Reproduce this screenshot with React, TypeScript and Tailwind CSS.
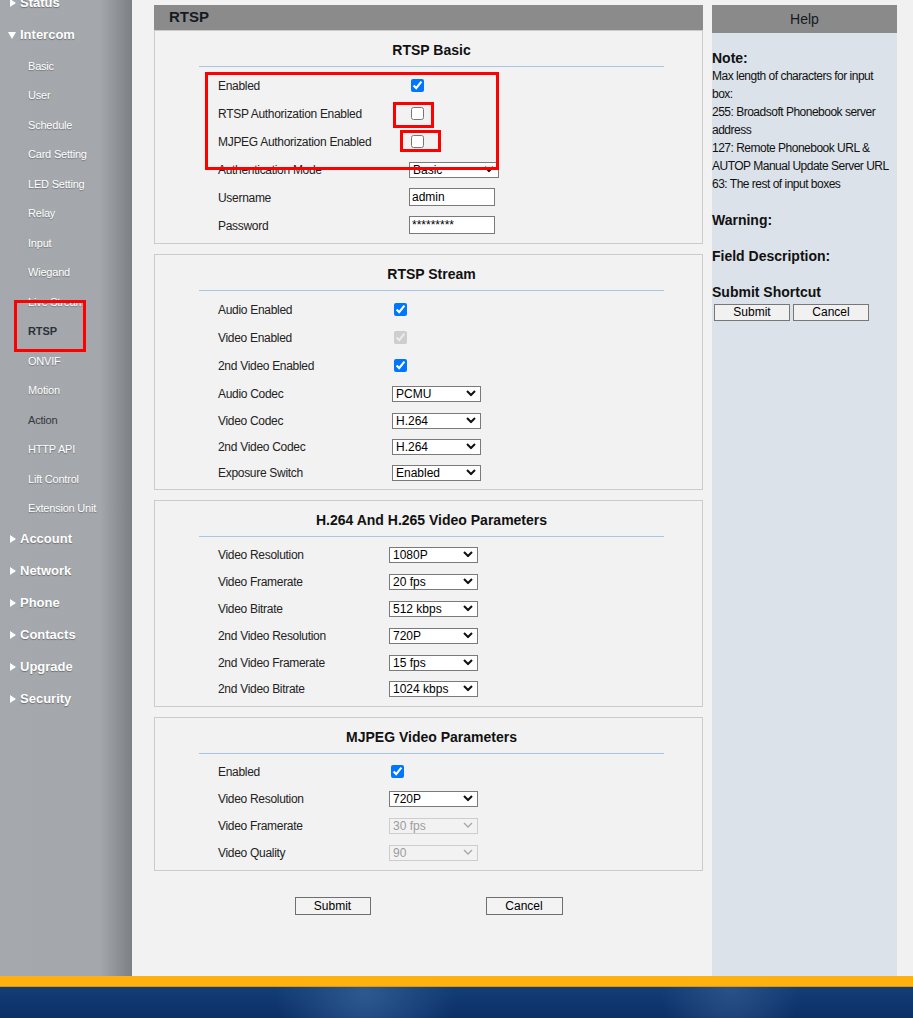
import React from "react";

type Row =
  | { label: string; kind: "check"; checked?: boolean; disabled?: boolean }
  | { label: string; kind: "select"; value: string; disabled?: boolean }
  | { label: string; kind: "input"; value: string };

const intercomItems = [
  "Basic",
  "User",
  "Schedule",
  "Card Setting",
  "LED Setting",
  "Relay",
  "Input",
  "Wiegand",
  "Live Stream",
  "RTSP",
  "ONVIF",
  "Motion",
  "Action",
  "HTTP API",
  "Lift Control",
  "Extension Unit",
];

const lowerSections = ["Account", "Network", "Phone", "Contacts", "Upgrade", "Security"];

function RightArrow() {
  return (
    <svg width="6" height="8" viewBox="0 0 6 8" className="shrink-0">
      <path d="M0 0l6 4-6 4z" fill="#fff" />
    </svg>
  );
}

function DownArrow() {
  return (
    <svg width="8" height="7" viewBox="0 0 8 7" className="shrink-0">
      <path d="M0 0h8L4 7z" fill="#fff" />
    </svg>
  );
}

function SectionHead({ label, open }: { label: string; open?: boolean }) {
  return (
    <div className={open ? "h-[32px] flex items-center gap-[4px] pl-[8px]" : "h-[32px] flex items-center gap-[4px] pl-[10px]"}>
      {open ? <DownArrow /> : <RightArrow />}
      <span className="text-[13px] font-bold text-white [text-shadow:0_1px_1px_rgba(0,0,0,0.35)]">{label}</span>
    </div>
  );
}

function Sidebar() {
  return (
    <aside className="w-[132px] shrink-0 bg-[linear-gradient(to_right,#a5a8ad_0px,#a4a7ac_100px,#7c7f84_132px)] overflow-hidden">
      <div className="mt-[-13px]">
        <SectionHead label="Status" />
        <SectionHead label="Intercom" open />
        {intercomItems.map((item) => {
          const active = item === "RTSP";
          const dark = item === "Action";
          return (
            <div key={item} className="h-[29.5px] flex items-center pl-[28px]">
              <span
                className={
                  active
                    ? "text-[11px] font-bold text-[#2e3138] tracking-[-0.1px]"
                    : dark
                    ? "text-[11px] text-[#33363c] tracking-[-0.2px]"
                    : "text-[11px] text-white tracking-[-0.2px] [text-shadow:0_1px_1px_rgba(0,0,0,0.3)]"
                }
              >
                {item}
              </span>
            </div>
          );
        })}
        {lowerSections.map((s) => (
          <SectionHead key={s} label={s} />
        ))}
      </div>
    </aside>
  );
}

function Chevron({ disabled }: { disabled?: boolean }) {
  return (
    <svg
      width="10"
      height="7"
      viewBox="0 0 10 7"
      className="absolute right-[5px] top-1/2 -translate-y-1/2 pointer-events-none"
    >
      <path
        d="M1 1.5l4 4 4-4"
        fill="none"
        stroke={disabled ? "#a8a8a8" : "#111"}
        strokeWidth={disabled ? 1.4 : 2}
      />
    </svg>
  );
}

function Control({ row, selectW }: { row: Row; selectW: string }) {
  if (row.kind === "check") {
    return (
      <input
        type="checkbox"
        defaultChecked={row.checked}
        disabled={row.disabled}
        className="ml-[2px] w-[13px] h-[13px]"
      />
    );
  }
  if (row.kind === "input") {
    return (
      <input
        type="text"
        defaultValue={row.value}
        className="w-[86px] h-[18px] bg-white border border-[#7a7a7a] px-[2px] text-[12px] text-black outline-none"
      />
    );
  }
  return (
    <div className={"relative " + selectW}>
      <select
        disabled={row.disabled}
        defaultValue={row.value}
        className={
          row.disabled
            ? "appearance-none w-full h-[16px] bg-transparent border border-[#cdcdcd] pl-[3px] text-[12px] leading-[14px] text-[#9c9c9c] outline-none"
            : "appearance-none w-full h-[16px] bg-white border border-[#7a7a7a] pl-[3px] text-[12px] leading-[14px] text-black outline-none"
        }
      >
        <option value={row.value}>{row.value}</option>
      </select>
      <Chevron disabled={row.disabled} />
    </div>
  );
}

function Box({
  title,
  rows,
  heights,
  labelW,
  selectW,
  className,
}: {
  title: string;
  rows: Row[];
  heights: string[];
  labelW: string;
  selectW: string;
  className: string;
}) {
  return (
    <section className={"border border-[#cbcbcb] " + className}>
      <div className="pt-[10px] ml-[44px] mr-[38px]">
        <h2 className="h-[18px] leading-[18px] text-center text-[14px] font-bold text-[#111]">{title}</h2>
        <div className="mt-[7px] h-px bg-[#a9c4e5]" />
        <div className="mt-[4px] pb-[4px]">
          {rows.map((row, i) => (
            <div key={row.label} className={"flex items-center pl-[19px] " + heights[i]}>
              <span className={"pt-[2px] text-[12px] tracking-[-0.3px] text-[#222] shrink-0 " + labelW}>{row.label}</span>
              <Control row={row} selectW={selectW} />
            </div>
          ))}
        </div>
      </div>
    </section>
  );
}

const basicRows: Row[] = [
  { label: "Enabled", kind: "check", checked: true },
  { label: "RTSP Authorization Enabled", kind: "check" },
  { label: "MJPEG Authorization Enabled", kind: "check" },
  { label: "Authentication Mode", kind: "select", value: "Basic" },
  { label: "Username", kind: "input", value: "admin" },
  { label: "Password", kind: "input", value: "*********" },
];

const streamRows: Row[] = [
  { label: "Audio Enabled", kind: "check", checked: true },
  { label: "Video Enabled", kind: "check", checked: true, disabled: true },
  { label: "2nd Video Enabled", kind: "check", checked: true },
  { label: "Audio Codec", kind: "select", value: "PCMU" },
  { label: "Video Codec", kind: "select", value: "H.264" },
  { label: "2nd Video Codec", kind: "select", value: "H.264" },
  { label: "Exposure Switch", kind: "select", value: "Enabled" },
];

const h264Rows: Row[] = [
  { label: "Video Resolution", kind: "select", value: "1080P" },
  { label: "Video Framerate", kind: "select", value: "20 fps" },
  { label: "Video Bitrate", kind: "select", value: "512 kbps" },
  { label: "2nd Video Resolution", kind: "select", value: "720P" },
  { label: "2nd Video Framerate", kind: "select", value: "15 fps" },
  { label: "2nd Video Bitrate", kind: "select", value: "1024 kbps" },
];

const mjpegRows: Row[] = [
  { label: "Enabled", kind: "check", checked: true },
  { label: "Video Resolution", kind: "select", value: "720P" },
  { label: "Video Framerate", kind: "select", value: "30 fps", disabled: true },
  { label: "Video Quality", kind: "select", value: "90", disabled: true },
];

function HelpPanel() {
  return (
    <aside className="w-[185px] shrink-0 pt-[5px] flex flex-col">
      <div className="h-[28px] bg-[#8a8a8a] flex items-center justify-center text-[14px] text-[#151a22]">Help</div>
      <div className="flex-1 bg-[#dbe2e9] pt-[16px] text-[#111]">
        <p className="text-[14px] font-bold leading-[18px]">Note:</p>
        <div className="text-[12px] leading-[18px] tracking-[-0.5px] whitespace-nowrap">
          <p>Max length of characters for input</p>
          <p>box:</p>
          <p>255: Broadsoft Phonebook server</p>
          <p>address</p>
          <p>127: Remote Phonebook URL &amp;</p>
          <p>AUTOP Manual Update Server URL</p>
          <p>63: The rest of input boxes</p>
        </div>
        <p className="mt-[18px] text-[14px] font-bold leading-[18px]">Warning:</p>
        <p className="mt-[18px] text-[14px] font-bold leading-[18px]">Field Description:</p>
        <p className="mt-[18px] text-[14px] font-bold leading-[18px]">Submit Shortcut</p>
        <div className="mt-[3px] flex gap-[3px] pl-[2px]">
          <button className="w-[76px] h-[17px] border border-[#777] bg-[#f1f1f1] text-[12px] leading-[15px] text-black">Submit</button>
          <button className="w-[76px] h-[17px] border border-[#777] bg-[#f1f1f1] text-[12px] leading-[15px] text-black">Cancel</button>
        </div>
      </div>
    </aside>
  );
}

export default function App() {
  return (
    <div className="relative w-[913px] h-[1018px] flex flex-col overflow-hidden font-['Liberation_Sans',Arial,sans-serif] bg-[#f1f1f1]">
      <div className="h-[976px] flex">
        <Sidebar />

        <main className="w-[580px] shrink-0 pl-[22px] pr-[9px] pt-[5px] bg-[#f2f2f2]">
          <div className="h-[25px] bg-[#8b8b8b] flex items-center pl-[15px] text-[15px] font-bold text-[#161b24]">RTSP</div>

          <Box
            title="RTSP Basic"
            rows={basicRows}
            heights={["h-[28px]", "h-[28px]", "h-[28px]", "h-[28px]", "h-[28px]", "h-[28px]"]}
            labelW="w-[191px]"
            selectW="w-[90px]"
            className=""
          />
          <Box
            title="RTSP Stream"
            rows={streamRows}
            heights={["h-[28px]", "h-[28px]", "h-[28px]", "h-[27px]", "h-[27px]", "h-[26px]", "h-[26px]"]}
            labelW="w-[174px]"
            selectW="w-[89px]"
            className="mt-[10px]"
          />
          <Box
            title="H.264 And H.265 Video Parameters"
            rows={h264Rows}
            heights={["h-[26.8px]", "h-[26.8px]", "h-[26.8px]", "h-[26.8px]", "h-[26.8px]", "h-[26.8px]"]}
            labelW="w-[171px]"
            selectW="w-[89px]"
            className="mt-[10px]"
          />
          <Box
            title="MJPEG Video Parameters"
            rows={mjpegRows}
            heights={["h-[27px]", "h-[27px]", "h-[27px]", "h-[27px]"]}
            labelW="w-[171px]"
            selectW="w-[89px]"
            className="mt-[10px]"
          />

          <div className="mt-[26px] flex justify-center gap-[115px]">
            <button className="w-[76px] h-[18px] border border-[#6f6f6f] bg-[#f3f3f3] text-[12px] leading-[16px] text-black">Submit</button>
            <button className="w-[77px] h-[18px] border border-[#6f6f6f] bg-[#f3f3f3] text-[12px] leading-[16px] text-black">Cancel</button>
          </div>
        </main>

        <HelpPanel />
        <div className="w-[16px] shrink-0 bg-[#f1f1f1]" />
      </div>

      <div className="h-[11px] bg-[#ffb20e] border-b border-[#d99a14]" />
      <div className="flex-1 bg-[radial-gradient(circle_at_40%_10%,#2d5890_0px,transparent_90px),radial-gradient(circle_at_80%_0%,#2a5188_0px,transparent_70px),linear-gradient(#143d76,#0c3068)]" />

      {/* annotation boxes */}
      <div className="absolute left-[205px] top-[72px] w-[294px] h-[98px] border-[3px] border-[#ff0000]" />
      <div className="absolute left-[393px] top-[102px] w-[41px] h-[26px] border-[3px] border-[#ff0000]" />
      <div className="absolute left-[400px] top-[130px] w-[41px] h-[22px] border-[3px] border-[#ff0000]" />
      <div className="absolute left-[14px] top-[300px] w-[72px] h-[52px] border-[3px] border-[#ff0000]" />
    </div>
  );
}
